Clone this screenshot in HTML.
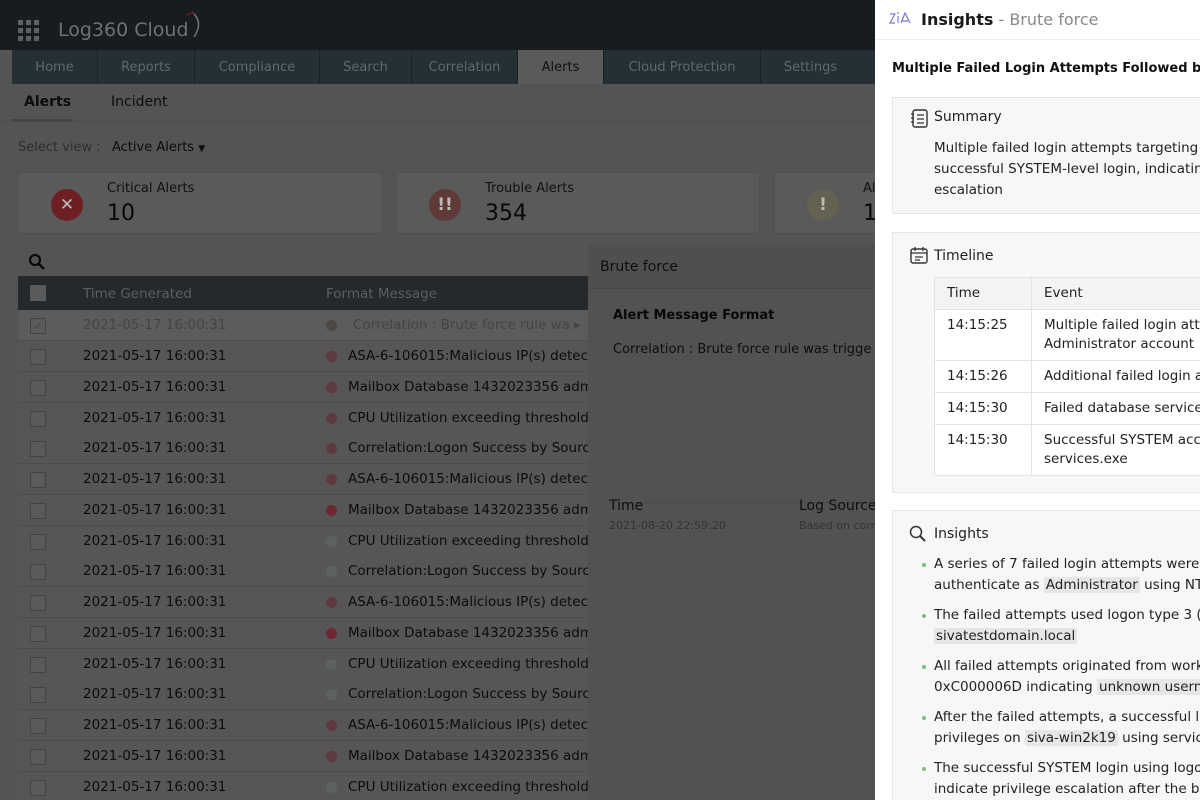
<!DOCTYPE html>
<html><head><meta charset="utf-8"><style>
*{box-sizing:border-box;margin:0;padding:0}
html,body{width:1200px;height:800px;overflow:hidden}
body{position:relative;background:#545454;font-family:"DejaVu Sans","Liberation Sans",sans-serif;}
.abs{position:absolute}
.top{left:0;top:0;width:875px;height:50px;background:#171c1f}
.nav{left:12px;top:50px;width:863px;height:34px;background:#243033;display:flex}
.nav div{color:#5f686b;font-size:13px;line-height:36px;text-align:center;border-right:1px solid #1a2225}
.nav .on{background:#5a5a5a;color:#111}
.sub{left:0;top:84px;width:875px;height:38px;border-bottom:1px solid #4c4c4c}
.card{top:172px;height:62px;background:#5a5a5a;border:1px solid #515151}
.ic{position:absolute;width:32px;height:32px;border-radius:50%;color:#bbb;text-align:center;line-height:32px;font-weight:bold;font-size:17px}
.row{position:absolute;left:18px;width:570px;height:31px;border-bottom:1px solid #4d4d4d;font-size:13.5px;color:#0c0c0c;background:#565656}
.row .cb{position:absolute;left:12px;top:8px;width:16px;height:16px;border:1px solid #444;background:#5a5a5a}
.row .t{position:absolute;left:65px;top:7px}
.row .d{position:absolute;left:308px;top:10px;width:11px;height:11px;border-radius:50%}
.row .m{position:absolute;left:330px;top:7px;white-space:nowrap;width:240px;overflow:hidden}
.r1{background:#6e2730}.r2{background:#5e3a40}.g{background:#5e625e}
.panel{left:875px;top:0;width:325px;height:800px;background:#fff;overflow:hidden}
.box{position:absolute;left:17px;width:320px;background:#f7f7f7;border:1px solid #e6e6e6}
.hd{font-size:14px;color:#222;position:absolute;left:41px}
.txt{font-size:13.5px;color:#222;line-height:21px;white-space:nowrap}
table{border-collapse:collapse;font-size:13.5px;color:#222;background:#fff}
td{border:1px solid #e3e3e3;vertical-align:top;padding:6px 12px;line-height:19px;white-space:nowrap}
.hl{background:#e6e6e6;padding:0 2px}
li{list-style:none;position:relative;margin-bottom:9px}
li:before{content:"";position:absolute;left:-12px;top:9px;width:4px;height:4px;border-radius:50%;background:#7cbf7c}
</style></head><body>
<div class="abs top">
 <svg class="abs" style="left:18px;top:20px" width="22" height="22"><g fill="#5f6366"><rect x="0" y="0" width="5" height="5"/><rect x="8" y="0" width="5" height="5"/><rect x="16" y="0" width="5" height="5"/><rect x="0" y="8" width="5" height="5"/><rect x="8" y="8" width="5" height="5"/><rect x="16" y="8" width="5" height="5"/><rect x="0" y="16" width="5" height="5"/><rect x="8" y="16" width="5" height="5"/><rect x="16" y="16" width="5" height="5"/></g></svg>
 <div class="abs" style="left:58px;top:19px;color:#6e7275;font-size:19px">Log360 Cloud</div>
 <svg class="abs" style="left:180px;top:10px" width="26" height="30"><path d="M12 2 Q24 12 14 27" stroke="#6e7275" fill="none" stroke-width="1.5"/><path d="M6 5 L14 3" stroke="#5a1818" stroke-width="2"/></svg>
</div>
<div class="abs nav">
 <div style="width:86px">Home</div><div style="width:97px">Reports</div><div style="width:125px">Compliance</div><div style="width:92px">Search</div><div style="width:106px">Correlation</div><div class="on" style="width:86px">Alerts</div><div style="width:157px">Cloud Protection</div><div style="width:99px;border:0">Settings</div>
</div>
<div class="abs sub">
 <div class="abs" style="left:24px;top:10px;font-size:14px;font-weight:bold;color:#0c0c0c">Alerts</div>
 <div class="abs" style="left:11px;top:35px;width:62px;height:3px;background:#444"></div>
 <div class="abs" style="left:111px;top:10px;font-size:14px;color:#0c0c0c">Incident</div>
</div>
<div class="abs" style="left:18px;top:140px;font-size:13px;color:#2e2e2e">Select view :</div>
<div class="abs" style="left:112px;top:140px;font-size:13px;color:#0c0c0c">Active Alerts <span style="font-size:9px">▼</span></div>
<div class="abs card" style="left:18px;width:364px"><div class="ic" style="left:32px;top:16px;background:#6e1f24">✕</div><div class="abs" style="left:88px;top:8px;font-size:13px;color:#111">Critical Alerts</div><div class="abs" style="left:88px;top:28px;font-size:22px;color:#080808">10</div></div>
<div class="abs card" style="left:396px;width:364px"><div class="ic" style="left:32px;top:16px;background:#603a36">!!</div><div class="abs" style="left:88px;top:8px;font-size:13px;color:#111">Trouble Alerts</div><div class="abs" style="left:88px;top:28px;font-size:22px;color:#080808">354</div></div>
<div class="abs card" style="left:774px;width:101px;border-right:0"><div class="ic" style="left:32px;top:16px;background:#63614f">!</div><div class="abs" style="left:88px;top:8px;font-size:13px;color:#111">Al</div><div class="abs" style="left:88px;top:28px;font-size:22px;color:#080808">1</div></div>
<svg class="abs" style="left:28px;top:253px" width="18" height="18"><circle cx="7" cy="7" r="5" stroke="#0a0a0a" stroke-width="2.2" fill="none"/><path d="M11 11 L16 16" stroke="#0a0a0a" stroke-width="2.5"/></svg>
<div class="abs" style="left:18px;top:276px;width:570px;height:34px;background:#25292b">
 <div class="abs" style="left:12px;top:9px;width:16px;height:16px;background:#5a5a5a"></div>
 <div class="abs" style="left:65px;top:10px;font-size:13.5px;color:#5e5e5e">Time Generated</div>
 <div class="abs" style="left:308px;top:10px;font-size:13.5px;color:#5e5e5e">Format Message</div>
</div>
<div class="row" style="top:310px;background:#5c5c5c;color:#444"><div class="cb" style="color:#444;font-size:12px;line-height:14px;text-align:center">✓</div><div class="t">2021-05-17 16:00:31</div><div class="d" style="background:#4c4944"></div><div class="m" style="left:335px">Correlation : Brute force rule wa ▸</div></div>
<div class="row" style="top:341px"><div class="cb"></div><div class="t">2021-05-17 16:00:31</div><div class="d r2"></div><div class="m">ASA-6-106015:Malicious IP(s) detected</div></div>
<div class="row" style="top:372px"><div class="cb"></div><div class="t">2021-05-17 16:00:31</div><div class="d r2"></div><div class="m">Mailbox Database 1432023356 admin</div></div>
<div class="row" style="top:403px"><div class="cb"></div><div class="t">2021-05-17 16:00:31</div><div class="d r2"></div><div class="m">CPU Utilization exceeding threshold v</div></div>
<div class="row" style="top:433px"><div class="cb"></div><div class="t">2021-05-17 16:00:31</div><div class="d r2"></div><div class="m">Correlation:Logon Success by Source</div></div>
<div class="row" style="top:464px"><div class="cb"></div><div class="t">2021-05-17 16:00:31</div><div class="d r2"></div><div class="m">ASA-6-106015:Malicious IP(s) detected</div></div>
<div class="row" style="top:495px"><div class="cb"></div><div class="t">2021-05-17 16:00:31</div><div class="d r1"></div><div class="m">Mailbox Database 1432023356 admin</div></div>
<div class="row" style="top:526px"><div class="cb"></div><div class="t">2021-05-17 16:00:31</div><div class="d g"></div><div class="m">CPU Utilization exceeding threshold v</div></div>
<div class="row" style="top:556px"><div class="cb"></div><div class="t">2021-05-17 16:00:31</div><div class="d g"></div><div class="m">Correlation:Logon Success by Source</div></div>
<div class="row" style="top:587px"><div class="cb"></div><div class="t">2021-05-17 16:00:31</div><div class="d r2"></div><div class="m">ASA-6-106015:Malicious IP(s) detected</div></div>
<div class="row" style="top:618px"><div class="cb"></div><div class="t">2021-05-17 16:00:31</div><div class="d r1"></div><div class="m">Mailbox Database 1432023356 admin</div></div>
<div class="row" style="top:649px"><div class="cb"></div><div class="t">2021-05-17 16:00:31</div><div class="d g"></div><div class="m">CPU Utilization exceeding threshold v</div></div>
<div class="row" style="top:679px"><div class="cb"></div><div class="t">2021-05-17 16:00:31</div><div class="d g"></div><div class="m">Correlation:Logon Success by Source</div></div>
<div class="row" style="top:710px"><div class="cb"></div><div class="t">2021-05-17 16:00:31</div><div class="d r2"></div><div class="m">ASA-6-106015:Malicious IP(s) detected</div></div>
<div class="row" style="top:741px"><div class="cb"></div><div class="t">2021-05-17 16:00:31</div><div class="d r2"></div><div class="m">Mailbox Database 1432023356 admin</div></div>
<div class="row" style="top:772px"><div class="cb"></div><div class="t">2021-05-17 16:00:31</div><div class="d g"></div><div class="m">CPU Utilization exceeding threshold v</div></div>
<div class="abs" style="left:588px;top:245px;width:287px;height:555px;background:#525252">
 <div class="abs" style="left:0;top:0;width:287px;height:44px;background:#4f4f4f;border-bottom:1px solid #494949"></div>
 <div class="abs" style="left:12px;top:14px;font-size:14px;color:#0e0e0e">Brute force</div>
 <div class="abs" style="left:25px;top:63px;font-size:13px;font-weight:bold;color:#080808">Alert Message Format</div>
 <div class="abs" style="left:25px;top:97px;font-size:13px;color:#0e0e0e;white-space:nowrap">Correlation : Brute force rule was trigge</div>
 <div class="abs" style="left:22px;top:257px;width:265px;height:1px;background:#4a4a4a"></div>
 <div class="abs" style="left:21px;top:253px;font-size:14px;color:#0e0e0e">Time</div>
 <div class="abs" style="left:21px;top:274px;font-size:11px;color:#333">2021-08-20 22:59:20</div>
 <div class="abs" style="left:211px;top:253px;font-size:14px;color:#0e0e0e;white-space:nowrap">Log Source</div>
 <div class="abs" style="left:211px;top:274px;font-size:11px;color:#333;white-space:nowrap">Based on corr</div>
</div>
<div class="abs panel">
 <div class="abs" style="left:0;top:0;width:325px;height:40px;border-bottom:1px solid #eee"></div>
 <svg class="abs" style="left:14px;top:11px" width="22" height="16"><path d="M1 3h5l-5 9h5M9 5v7M8 2h2M12 12l4-10 5 10M13 10h6" fill="none" stroke="#7878d8" stroke-width="1.2"/></svg>
 <div class="abs" style="left:46px;top:10px;font-size:16px;color:#1a1a1a;white-space:nowrap"><b style="font-weight:600">Insights</b> <span style="color:#888">- Brute force</span></div>
 <div class="abs" style="left:17px;top:61px;font-size:13px;font-weight:bold;color:#111;white-space:nowrap">Multiple Failed Login Attempts Followed by</div>
 <div class="box" style="top:97px;height:117px">
  <svg class="abs" style="left:18px;top:11px" width="18" height="20"><rect x="2" y="1" width="14" height="17" rx="2" fill="none" stroke="#333" stroke-width="1.4"/><path d="M6 6h7M6 10h7M6 14h7M0 5h3M0 9h3M0 13h3" stroke="#333" stroke-width="1.3"/></svg>
  <div class="hd" style="top:11px">Summary</div>
  <div class="abs txt" style="left:41px;top:40px">Multiple failed login attempts targeting th<br>successful SYSTEM-level login, indicating<br>escalation</div>
 </div>
 <div class="box" style="top:232px;height:261px">
  <svg class="abs" style="left:17px;top:13px" width="18" height="18"><rect x="1" y="3" width="16" height="14" rx="2" fill="none" stroke="#333" stroke-width="1.4"/><path d="M1 7h16M5 1v4M13 1v4M5 11h8M5 14h5" stroke="#333" stroke-width="1.3"/></svg>
  <div class="hd" style="top:15px">Timeline</div>
  <table class="abs" style="left:41px;top:44px;width:300px">
   <tr style="background:#f3f3f3;height:31px"><td style="width:97px">Time</td><td>Event</td></tr>
   <tr style="height:50px"><td>14:15:25</td><td>Multiple failed login atte<br>Administrator account</td></tr>
   <tr style="height:32px"><td>14:15:26</td><td>Additional failed login at</td></tr>
   <tr style="height:32px"><td>14:15:30</td><td>Failed database service</td></tr>
   <tr style="height:51px"><td>14:15:30</td><td>Successful SYSTEM acco<br>services.exe</td></tr>
  </table>
 </div>
 <div class="box" style="top:510px;height:300px">
  <svg class="abs" style="left:15px;top:13px" width="20" height="20"><circle cx="8" cy="8" r="5.5" fill="none" stroke="#333" stroke-width="1.5"/><path d="M12 12l5 5" stroke="#333" stroke-width="2"/></svg>
  <div class="hd" style="top:15px">Insights</div>
  <ul class="abs txt" style="left:41px;top:43px">
   <li>A series of 7 failed login attempts were c<br>authenticate as <span class="hl">Administrator</span> using NTLM</li>
   <li>The failed attempts used logon type 3 (n<br><span class="hl">sivatestdomain.local</span></li>
   <li>All failed attempts originated from works<br>0xC000006D indicating <span class="hl">unknown userna</span></li>
   <li>After the failed attempts, a successful lo<br>privileges on <span class="hl">siva-win2k19</span> using services</li>
   <li>The successful SYSTEM login using logon<br>indicate privilege escalation after the bru</li>
  </ul>
 </div>
</div>
</body></html>
